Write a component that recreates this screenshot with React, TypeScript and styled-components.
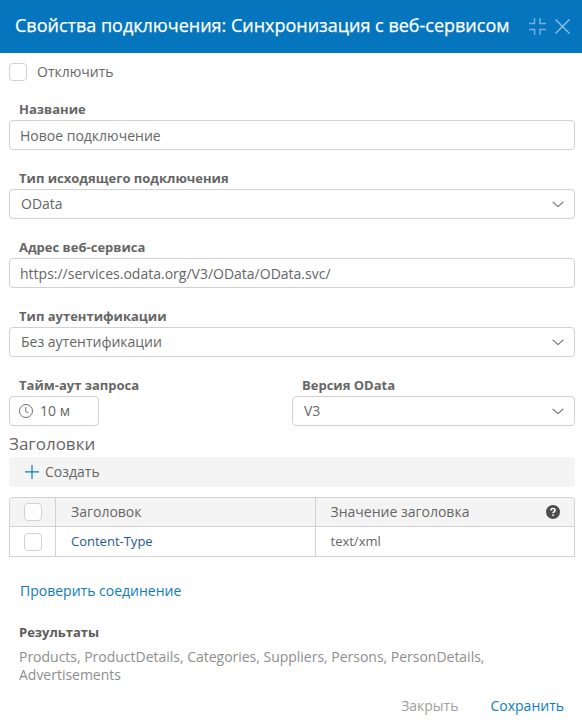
import React from 'react';
import styled, { createGlobalStyle } from 'styled-components';

const GlobalStyle = createGlobalStyle`
  *, *::before, *::after { box-sizing: border-box; }
  body {
    margin: 0;
    background: #fff;
    color: #666;
    font: 14px/18px "Open Sans", sans-serif;
  }
`;

const Dialog = styled.div`
  display: flex;
  flex-direction: column;
  width: 582px;
  height: 728px;
  overflow: hidden;
`;

const Header = styled.header`
  display: flex;
  align-items: center;
  flex: none;
  height: 53px;
  padding: 0 12px 0 15px;
  background: #0575be;
  color: #fff;
`;

const Title = styled.h1`
  flex: 1;
  margin: 0;
  padding-bottom: 4px;
  font-size: 18px;
  font-weight: 400;
  line-height: 24px;
  letter-spacing: -0.01px;
  white-space: nowrap;
  -webkit-text-stroke: 0.25px #fff;
`;

const WindowButtons = styled.div`
  display: flex;
  align-items: center;
  gap: 9px;
`;

const Icon = styled.svg`
  display: block;
  flex: none;
  fill: none;
`;

const Body = styled.main`
  display: flex;
  flex-direction: column;
  padding: 10px 7px 0 9px;
`;

const CheckRow = styled.label`
  display: flex;
  align-items: center;
  gap: 10px;
  height: 18px;
  margin-bottom: 19px;
`;

const Checkbox = styled.span`
  flex: none;
  width: 18px;
  height: 18px;
  border: 1px solid #d1d1d1;
  border-radius: 4px;
  background: #fff;
`;

const Field = styled.div<{ $width?: number }>`
  display: flex;
  flex-direction: column;
  width: ${p => (p.$width ? `${p.$width}px` : 'auto')};
  height: 50px;
  margin-bottom: 19px;
`;

const Label = styled.div`
  height: 20px;
  padding-left: 10px;
  font-size: 13px;
  font-weight: 700;
  line-height: 19px;
  white-space: nowrap;
`;

const Control = styled.div`
  display: flex;
  align-items: center;
  width: 100%;
  height: 30px;
  padding: 0 10px;
  border: 1px solid #d1d1d1;
  border-radius: 4px;
`;

const TextInput = styled(Control)`
  padding-top: 2px;
`;

const SelectBox = styled(Control)`
  padding-left: 11px;
`;

const TimeBox = styled(Control)`
  gap: 7px;
  padding-left: 9px;
`;

const Value = styled.span`
  flex: 1;
  white-space: nowrap;
`;

const FieldRow = styled.div`
  display: flex;
  justify-content: space-between;
  height: 58px;
`;

const SectionTitle = styled.h2`
  height: 22px;
  margin: 0 0 1px;
  font-size: 17px;
  font-weight: 400;
  line-height: 19px;
`;

const Toolbar = styled.div`
  display: flex;
  align-items: center;
  gap: 6px;
  height: 30px;
  margin-bottom: 10px;
  padding-left: 16px;
  border-radius: 4px;
  background: #f4f4f4;
`;

const Table = styled.div`
  display: grid;
  grid-template-columns: 46px 260px 1fr;
  grid-template-rows: 29px 30px;
  height: 60px;
  overflow: hidden;
  border: 1px solid #d1d1d1;
  border-top-left-radius: 4px;
  border-top-right-radius: 4px;
  border-bottom: 0;
`;

const Cell = styled.div<{ $last?: boolean }>`
  display: flex;
  align-items: center;
  justify-content: space-between;
  padding: 0 14px 2px ${p => (p.$last ? 14.5 : 15)}px;
  border-right: ${p => (p.$last ? '0' : '1px solid #d1d1d1')};
  border-bottom: 1px solid #d1d1d1;
  font-size: 13px;
`;

const CheckCell = styled(Cell)`
  justify-content: flex-start;
  padding: 0 0 0 14px;
`;

const HeadCell = styled(Cell)`
  padding-bottom: 0;
  background: #f4f4f4;
  font-size: 14px;
`;

const HeadCheckCell = styled(CheckCell)`
  background: #f4f4f4;
`;

const CellLink = styled.span`
  color: #1f5a93;
`;

const TestLink = styled.a`
  align-self: flex-start;
  height: 18px;
  margin: 25px 0 23px 11px;
  color: #0d7bc4;
`;

const Results = styled.section`
  padding-left: 10px;
  color: #8e8e8e;
`;

const ResultsTitle = styled.div`
  height: 18px;
  margin-bottom: 7px;
  color: #5c5c5c;
  font-size: 13px;
  font-weight: 700;
`;

const ResultsText = styled.p`
  margin: 0;
  width: 480px;
  letter-spacing: -0.015px;
`;

const Footer = styled.footer`
  display: flex;
  justify-content: flex-end;
  gap: 32px;
  margin-top: 13px;
  padding-right: 11px;
`;

const Action = styled.span<{ $primary?: boolean }>`
  color: ${p => (p.$primary ? '#0d7bc4' : '#a0a0a0')};
`;

const Chevron = () => (
  <Icon width="12" height="7" viewBox="0 0 12 7" stroke="#666" strokeWidth="1.1">
    <path d="M.7 .8 6 5.6 11.3 .8" />
  </Icon>
);

const RestoreIcon = () => (
  <Icon width="17" height="17" viewBox="0 0 17 17" stroke="#72b1dc" strokeWidth="1.5">
    <path d="M0 5.5H5.5V0M11 0V5.5H17M0 11.5H5.5V17M17 11.5H11V17" />
  </Icon>
);

const CloseIcon = () => (
  <Icon width="15" height="15" viewBox="0 0 15 15" stroke="#8fc2e4" strokeWidth="1.4">
    <path d="M.5 .5 14.5 14.5M14.5 .5 .5 14.5" />
  </Icon>
);

const ClockIcon = () => (
  <Icon width="14" height="14" viewBox="0 0 14 14" stroke="#707070">
    <circle cx="7" cy="7" r="6.5" />
    <path d="M6.7 3V7.5L9.4 8.8" />
  </Icon>
);

const PlusIcon = () => (
  <Icon width="14" height="14" viewBox="0 0 14 14" stroke="#0d7bc4" strokeWidth="1.2">
    <path d="M0 6.8H14M7 0V14" />
  </Icon>
);

const HelpIcon = () => (
  <Icon width="14" height="14" viewBox="0 0 14 14">
    <circle cx="7" cy="7" r="7" fill="#4d4d4d" />
    <path d="M4.9 5.4C4.9 3 9.1 2.9 9.1 5.3 9.1 6.8 7.1 6.7 7.1 8.3M7.1 9.5V11" stroke="#fff" strokeWidth="1.6" />
  </Icon>
);

export default function App() {
  return (
    <>
      <GlobalStyle />
      <Dialog>
        <Header>
          <Title>Свойства подключения: Синхронизация с веб-сервисом</Title>
          <WindowButtons>
            <RestoreIcon />
            <CloseIcon />
          </WindowButtons>
        </Header>
        <Body>
          <CheckRow>
            <Checkbox />
            <span>Отключить</span>
          </CheckRow>
          <Field>
            <Label>Название</Label>
            <TextInput><Value>Новое подключение</Value></TextInput>
          </Field>
          <Field>
            <Label>Тип исходящего подключения</Label>
            <SelectBox><Value>OData</Value><Chevron /></SelectBox>
          </Field>
          <Field>
            <Label>Адрес веб-сервиса</Label>
            <TextInput><Value>https://services.odata.org/V3/OData/OData.svc/</Value></TextInput>
          </Field>
          <Field>
            <Label>Тип аутентификации</Label>
            <SelectBox><Value>Без аутентификации</Value><Chevron /></SelectBox>
          </Field>
          <FieldRow>
            <Field $width={90}>
              <Label>Тайм-аут запроса</Label>
              <TimeBox><ClockIcon /><Value>10 м</Value></TimeBox>
            </Field>
            <Field $width={283}>
              <Label>Версия OData</Label>
              <SelectBox><Value>V3</Value><Chevron /></SelectBox>
            </Field>
          </FieldRow>
          <SectionTitle>Заголовки</SectionTitle>
          <Toolbar>
            <PlusIcon />
            <span>Создать</span>
          </Toolbar>
          <Table>
            <HeadCheckCell><Checkbox /></HeadCheckCell>
            <HeadCell>Заголовок</HeadCell>
            <HeadCell $last>Значение заголовка<HelpIcon /></HeadCell>
            <CheckCell><Checkbox /></CheckCell>
            <Cell><CellLink>Content-Type</CellLink></Cell>
            <Cell $last>text/xml</Cell>
          </Table>
          <TestLink>Проверить соединение</TestLink>
          <Results>
            <ResultsTitle>Результаты</ResultsTitle>
            <ResultsText>
              Products, ProductDetails, Categories, Suppliers, Persons, PersonDetails, Advertisements
            </ResultsText>
          </Results>
          <Footer>
            <Action>Закрыть</Action>
            <Action $primary>Сохранить</Action>
          </Footer>
        </Body>
      </Dialog>
    </>
  );
}
